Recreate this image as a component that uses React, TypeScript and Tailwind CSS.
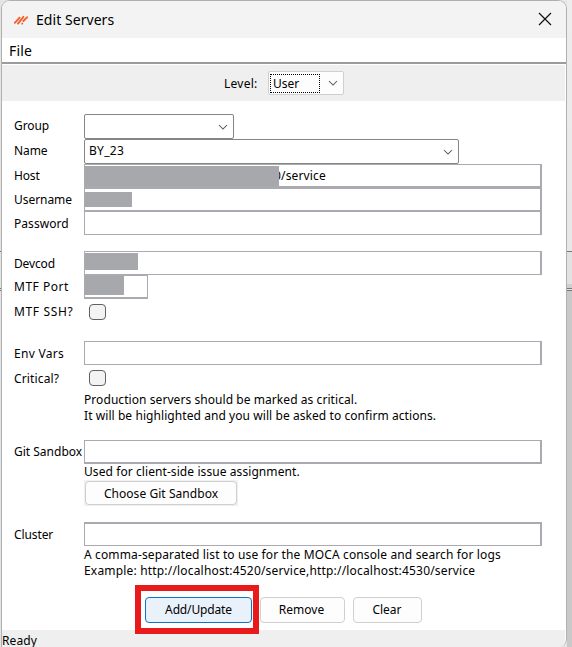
import type { ReactNode } from 'react';

function Chevron({ className = '' }: { className?: string }) {
  return (
    <svg className={`shrink-0 ${className}`} width="10" height="6" viewBox="0 0 10 6" fill="none">
      <path d="M1 1 L5 5 L9 1" stroke="#555" strokeWidth="1.05" />
    </svg>
  );
}

function Row({ label, className, labelClass = '', children }: { label?: string; className: string; labelClass?: string; children?: ReactNode }) {
  return (
    <div className={`flex shrink-0 ${className}`}>
      <div className={`flex w-[82px] shrink-0 items-center pl-3 ${labelClass}`}>{label}</div>
      {children}
    </div>
  );
}

function Field({ className = 'border-y', children }: { className?: string; children?: ReactNode }) {
  return (
    <div className={`flex h-full w-[458px] border-l border-r-2 border-[#aaaab0] bg-white ${className}`}>{children}</div>
  );
}

function Mask({ className }: { className: string }) {
  return <div className={`bg-[#a7a8ac] ${className}`} />;
}

function Check() {
  return <div className="ml-[5px] h-4 w-[17px] rounded-[4px] border border-[#606060] bg-[#f3f3f3]" />;
}

function Button({ className, children }: { className: string; children: ReactNode }) {
  return (
    <div className={`flex shrink-0 items-center justify-center rounded-[4px] border ${className}`}>{children}</div>
  );
}

export default function App() {
  return (
    <div className="flex h-[647px] w-[572px] overflow-hidden bg-[#e6e6e6] font-['Noto_Sans',sans-serif] text-[12px] leading-4 whitespace-nowrap text-black">
      <div className="w-px shrink-0 bg-[#e4e4e4]">
        <div className="mt-[251px] h-px bg-[#777]" />
        <div className="mt-9 h-px bg-[#777]" />
        <div className="mt-px h-px bg-[#777]" />
      </div>
      <div className="flex h-[647px] w-[566px] shrink-0 flex-col overflow-hidden rounded-t-[9px] rounded-br-[8px] border-x border-t border-[#b0b0b0] bg-white">
        <div className="flex h-[37px] shrink-0 items-center bg-[#f3f3f3] pl-[11px]">
          <svg width="16" height="12" viewBox="0 0 16 12" stroke="#f0622d" strokeWidth="1.9" strokeLinecap="round" fill="none">
            <path d="M1.8 8.8 L6.6 3.6 M5 9.6 L10.4 2.8 M9.2 9.7 L9.3 9.6 M10.4 7 L14.2 3.2" />
          </svg>
          <span className="ml-[7px] text-[14px] leading-5 tracking-[0.05px]">Edit Servers</span>
          <svg className="mr-[14px] mb-px ml-auto" width="14" height="14" viewBox="0 0 14 14" fill="none">
            <path d="M1 1 L13 13 M13 1 L1 13" stroke="#111" strokeWidth="1.2" />
          </svg>
        </div>
        <div className="flex h-6 shrink-0 items-center pt-px pl-[7px] text-[14px] tracking-[0.2px]">File</div>
        <div className="h-[2px] shrink-0 bg-[#9c9c9c]" />
        <div className="mt-px mr-px flex h-9 shrink-0 items-center bg-[#efefef] pl-[222px]">
          <span className="w-11 pt-px tracking-[0.25px]">Level:</span>
          <div className="flex h-[24px] w-[76px] items-center rounded-[2px] border border-[#cfcfcf] bg-[#fdfdfd]">
            <div className="ml-px flex h-[19px] w-[50px] items-center border border-dotted border-black pt-px pl-[2px]">User</div>
            <Chevron className="ml-2" />
          </div>
        </div>

        <div className="flex h-[529px] shrink-0 flex-col pt-[13px]">
          <Row label="Group" className="h-[25px]" labelClass="pb-[2px] tracking-[-0.1px]">
            <div className="flex w-[150px] items-center justify-end rounded-[2px] border border-[#858585] pr-[5px]">
              <Chevron />
            </div>
          </Row>
          <Row label="Name" className="h-[25px]" labelClass="pb-[2px] tracking-[-0.1px]">
            <div className="flex w-[375px] items-center justify-between rounded-[2px] border border-[#858585] pr-[5px] pl-1">
              <span className="-mt-px tracking-[0.3px]">BY_23</span>
              <Chevron />
            </div>
          </Row>
          <Row label="Host" className="h-6" labelClass="tracking-[-0.15px]">
            <Field className="items-center border-t border-b-2">
              <Mask className="relative z-10 -mr-[5px] h-5 w-[194px] shrink-0" />
              <span className="tracking-[0.15px]">0/service</span>
            </Field>
          </Row>
          <Row label="Username" className="h-[23px]" labelClass="tracking-[-0.05px]">
            <Field className="items-center border-y">
              <Mask className="h-[15px] w-[47px]" />
            </Field>
          </Row>
          <Row label="Password" className="h-6" labelClass="pt-[2px] tracking-[0.05px]">
            <Field />
          </Row>
          <Row label="Devcod" className="mt-4 h-6" labelClass="pt-[2px] tracking-[-0.15px]">
            <Field>
              <Mask className="mt-px h-[17px] w-[53px]" />
            </Field>
          </Row>
          <Row label="MTF Port" className="h-6" labelClass="tracking-[0.5px]">
            <div className="w-16 border border-b-2 border-[#aaaab0]">
              <Mask className="h-[19px] w-[39px]" />
            </div>
          </Row>
          <Row label="MTF SSH?" className="mt-[5px] h-4" labelClass="tracking-[0.65px]">
            <Check />
          </Row>
          <Row label="Env Vars" className="mt-[21px] h-6" labelClass="pt-[2px] tracking-[0.3px]">
            <Field />
          </Row>
          <Row label="Critical?" className="mt-[5px] h-4" labelClass="pt-[2px] tracking-[0.15px]">
            <Check />
          </Row>
          <div className="mt-[6px] ml-[82px] h-8 shrink-0">
            <div className="tracking-[0.065px]">Production servers should be marked as critical.</div>
            <div className="tracking-[0.07px]">It will be highlighted and you will be asked to confirm actions.</div>
          </div>
          <Row label="Git Sandbox" className="mt-4 h-6">
            <Field className="border-t border-b-2" />
          </Row>
          <div className="ml-[82px] h-4 shrink-0 tracking-[0.08px]">Used for client-side issue assignment.</div>
          <div className="ml-[82px] flex h-[26px] w-[154px] shrink-0 bg-[#f0f0f0] p-px">
            <Button className="h-6 w-[152px] border-[#cfcfcf] bg-[#fdfdfd] pt-[2px] tracking-[0.05px]">Choose Git Sandbox</Button>
          </div>
          <Row label="Cluster" className="mt-4 h-6" labelClass="pt-[2px] tracking-[-0.1px]">
            <Field className="border-t-2 border-b" />
          </Row>
          <div className="ml-[82px] h-8 shrink-0 pt-px">
            <div className="tracking-[0.13px]">A comma-separated list to use for the MOCA console and search for logs</div>
            <div className="tracking-[0.18px]">Example: http://localhost:4520/service,http://localhost:4530/service</div>
          </div>
          <div className="relative z-10 mt-[7px] ml-[133px] flex h-[49px] shrink-0 items-center">
            <div className="flex h-[49px] w-[124px] shrink-0 items-center justify-end border-[6px] border-[#e81a1c] bg-white pr-px">
              <Button className="mt-px h-[26px] w-[107px] border-[#0f73c4] bg-[#e9f2fb] tracking-[-0.15px]">Add/Update</Button>
            </div>
            <Button className="mt-px ml-px h-[26px] w-[85px] border-[#cfcfcf] bg-[#fdfdfd] pr-[2px] tracking-[0.05px]">Remove</Button>
            <Button className="mt-px ml-2 h-[26px] w-[69px] border-[#cfcfcf] bg-[#fdfdfd] pr-px">Clear</Button>
          </div>
        </div>
        <div className="mr-px h-[17px] shrink-0 bg-[#efefef] pt-[4px] leading-[13px] tracking-[0.1px]">Ready</div>
      </div>
      <div className="w-[5px] shrink-0 bg-linear-to-b from-[#ededed] to-[#dedede]">
        <div className="mt-[251px] h-px bg-[#777]" />
        <div className="h-8 bg-[#e2e2e2]" />
        <div className="h-1 bg-[#cfcfcf]" />
        <div className="h-px bg-[#777]" />
        <div className="mt-px h-px bg-[#777]" />
        <div className="h-[356px] bg-[#c9c9c9]" />
      </div>
    </div>
  );
}
